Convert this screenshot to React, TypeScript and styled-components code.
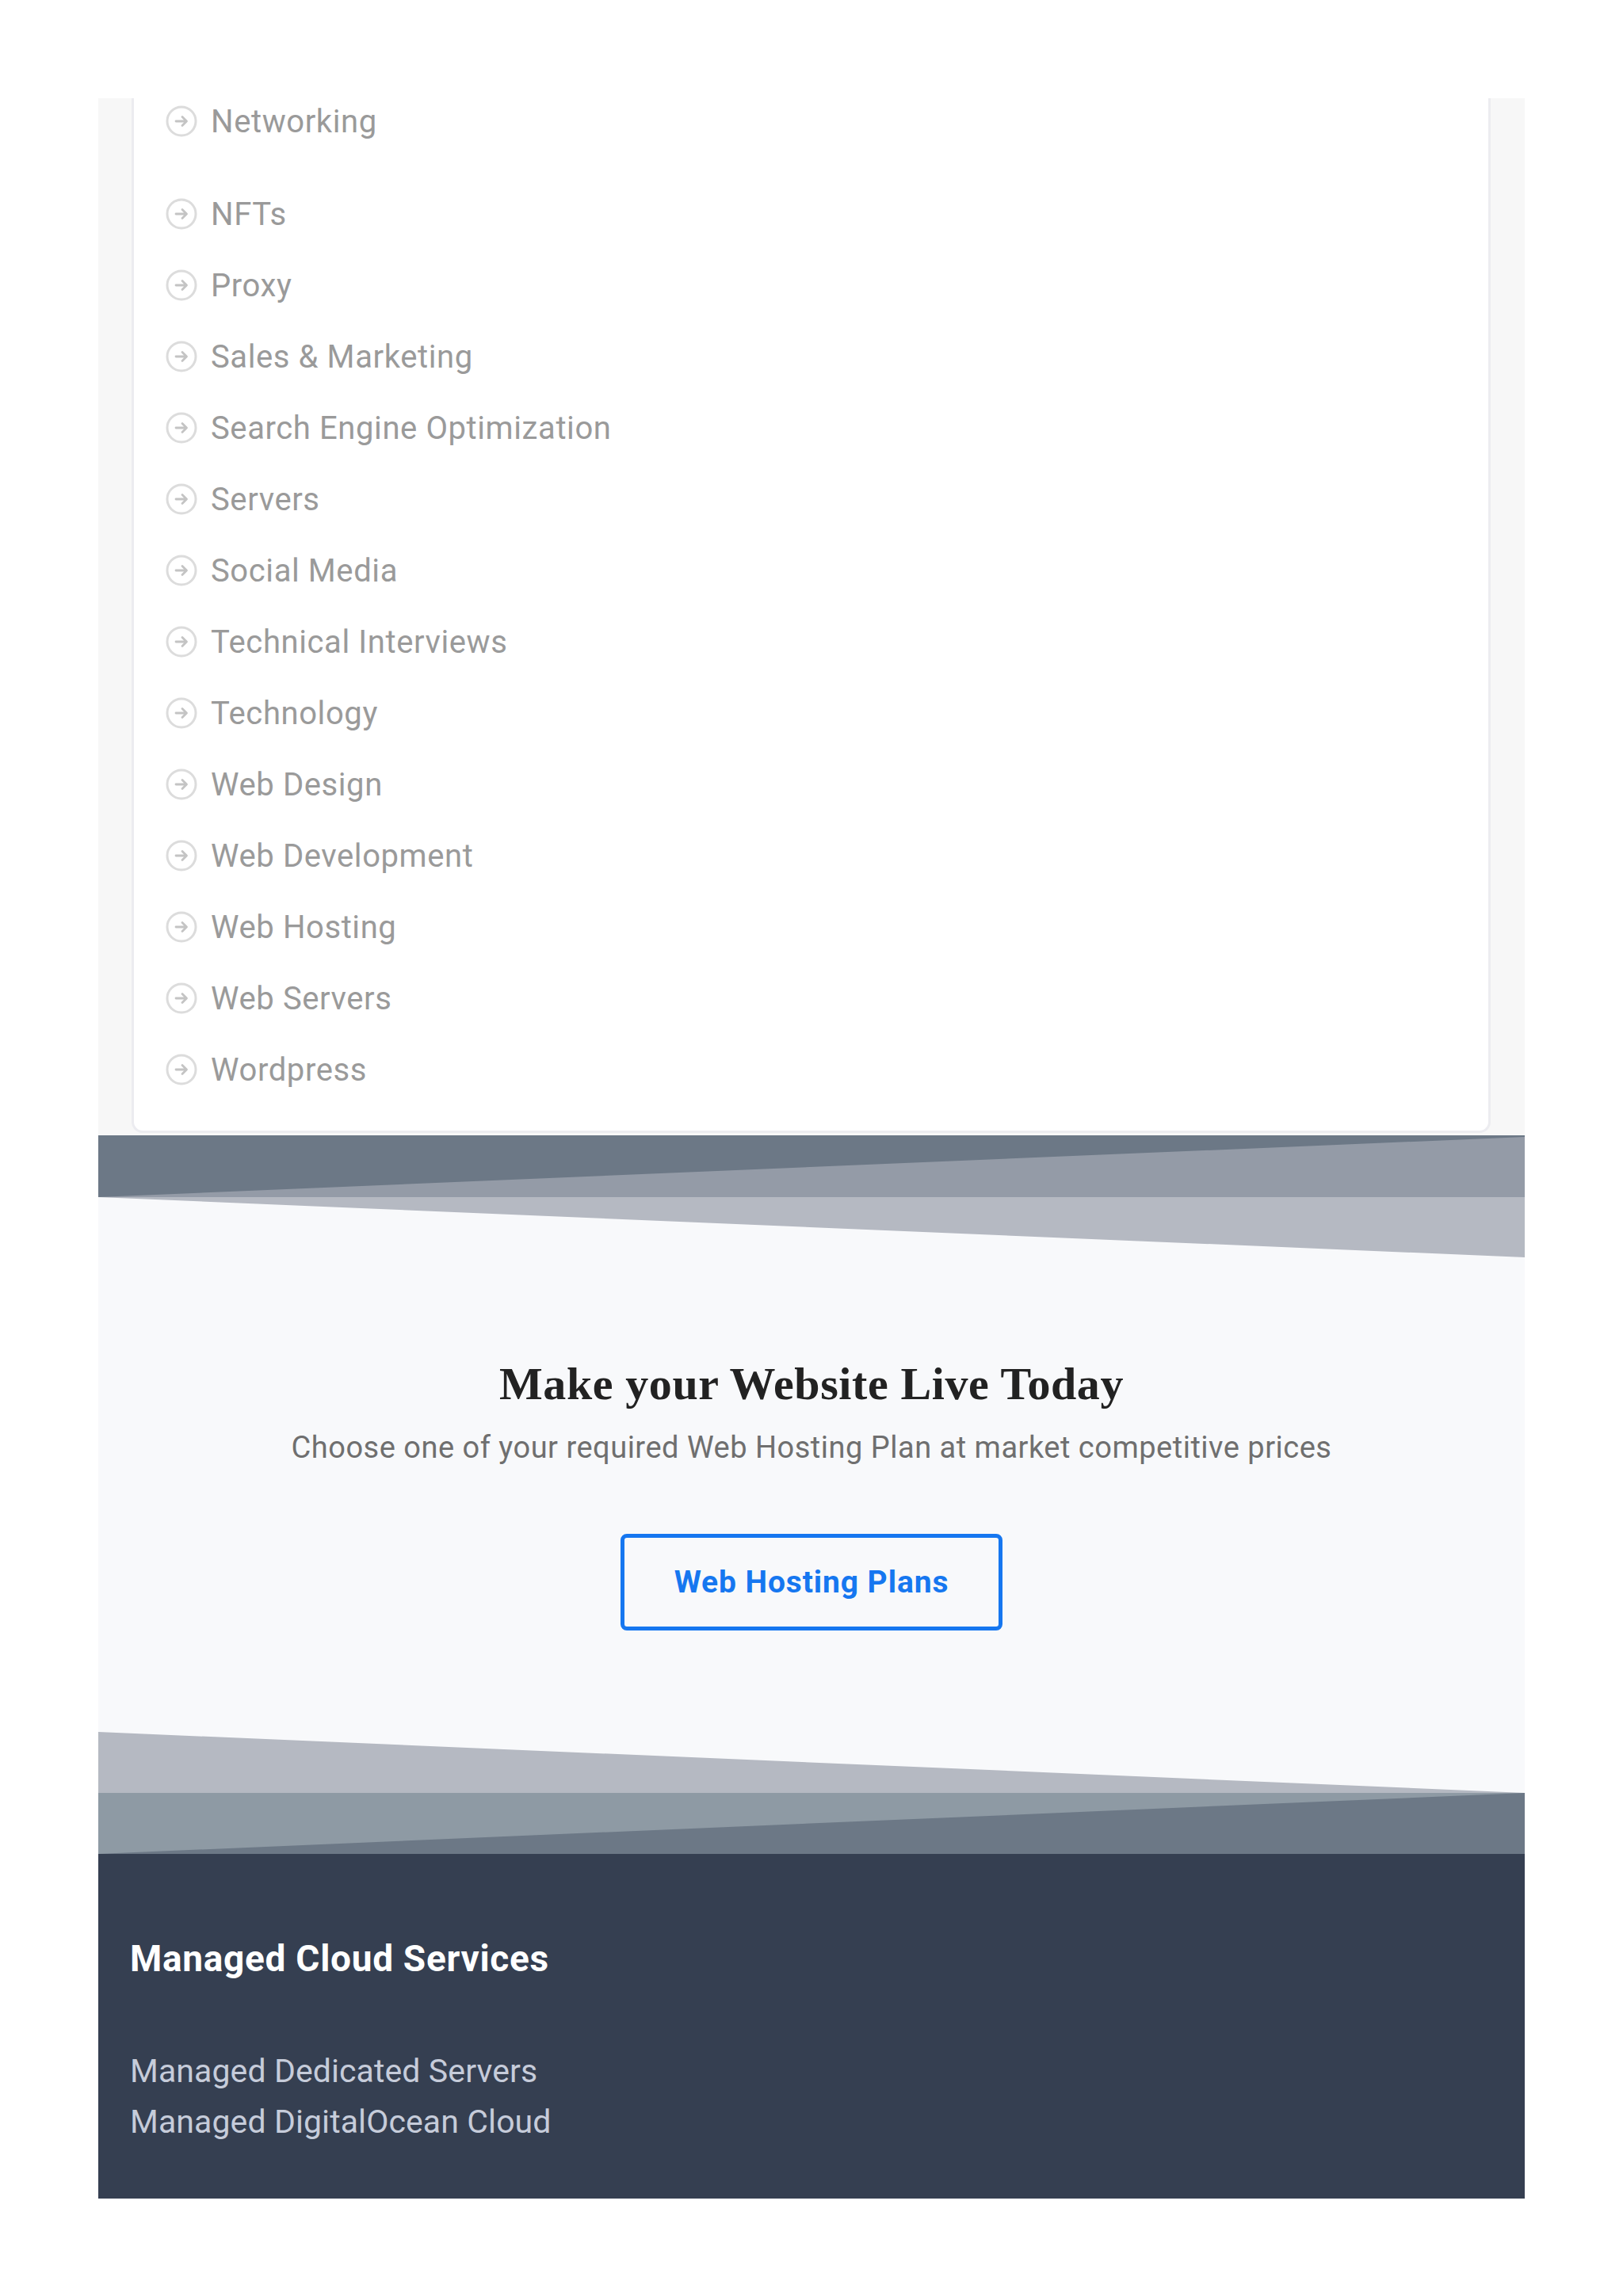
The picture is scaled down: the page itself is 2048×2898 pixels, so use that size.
import React from "react";
import styled, { createGlobalStyle } from "styled-components";

const GlobalStyle = createGlobalStyle`
  html, body {
    margin: 0;
    padding: 0;
    background: #ffffff;
    font-family: Roboto, "Liberation Sans", Arial, sans-serif;
  }
`;

const Page = styled.div`
  width: 2048px;
  padding: 124px 124px 125px;
  box-sizing: border-box;
`;

const Container = styled.div`
  width: 1800px;
  display: flex;
  flex-direction: column;
`;

const SideBg = styled.div`
  background: #f7f7f7;
  padding: 0 43px 3px 42px;
`;

const Card = styled.div`
  background: #fff;
  border: 3px solid #ececf0;
  border-top: none;
  border-radius: 0 0 14px 14px;
  padding: 0 0 32px 40px;
`;

const CategoryList = styled.ul`
  list-style: none;
  margin: 0;
  padding: 0;
  display: flex;
  flex-direction: column;
`;

const CategoryItem = styled.li<{ first?: boolean }>`
  display: flex;
  align-items: center;
  height: ${props => (props.first ? "58px" : "90px")};
  margin-bottom: ${props => (props.first ? "43px" : "0")};
  color: #9a9a9a;
  font-size: 40px;
  letter-spacing: 0.6px;
`;

const IconWrap = styled.span`
  display: inline-flex;
  width: 40px;
  height: 40px;
  margin-right: 17px;
`;

const Wave = styled.svg`
  display: block;
  width: 1800px;
  height: 154px;
`;

const Cta = styled.section`
  background: #f8f9fb;
  display: flex;
  flex-direction: column;
  align-items: center;
  padding: 125px 0 128px;
`;

const CtaTitle = styled.h2`
  margin: 0;
  font-family: "Liberation Serif", "DejaVu Serif", serif;
  font-weight: 700;
  font-size: 58px;
  line-height: 70px;
  color: #222;
  letter-spacing: 0.6px;
`;

const CtaText = styled.p`
  margin: 20px 0 0;
  font-size: 38px;
  line-height: 50px;
  color: #6f6f6f;
  letter-spacing: 0.5px;
`;

const CtaButton = styled.a`
  margin-top: 84px;
  display: flex;
  align-items: center;
  justify-content: center;
  box-sizing: border-box;
  width: 482px;
  height: 122px;
  border: 5px solid #1677f0;
  border-radius: 8px;
  color: #1677f0;
  font-weight: 700;
  font-size: 39px;
  letter-spacing: 0.9px;
  text-decoration: none;
`;

const Footer = styled.footer`
  background: #353f51;
  padding: 104px 40px 65px;
`;

const FooterTitle = styled.h3`
  margin: 0;
  color: #fff;
  font-size: 46px;
  line-height: 56px;
  font-weight: 700;
  letter-spacing: 0.7px;
`;

const FooterLinks = styled.div`
  margin-top: 82px;
  display: flex;
  flex-direction: column;
`;

const FooterLink = styled.a`
  color: #c6ccda;
  font-size: 41px;
  line-height: 64px;
  letter-spacing: 0.1px;
  text-decoration: none;
`;

const categories = [
  "Networking",
  "NFTs",
  "Proxy",
  "Sales & Marketing",
  "Search Engine Optimization",
  "Servers",
  "Social Media",
  "Technical Interviews",
  "Technology",
  "Web Design",
  "Web Development",
  "Web Hosting",
  "Web Servers",
  "Wordpress"
];

const ArrowCircle = () => (
  <IconWrap>
    <svg width="40" height="40" viewBox="0 0 40 40" fill="none">
      <circle cx="20" cy="20" r="18" stroke="#dcdcdc" strokeWidth="3" />
      <path
        d="M13 20h13M21 14.5l5.5 5.5-5.5 5.5"
        stroke="#c4c4c4"
        strokeWidth="2.8"
        strokeLinecap="round"
        strokeLinejoin="round"
      />
    </svg>
  </IconWrap>
);

const TopWave = () => (
  <Wave viewBox="0 0 1800 154" preserveAspectRatio="none">
    <rect x="0" y="0" width="1800" height="78" fill="#6c7886" />
    <polygon points="0,78 1800,2 1800,78" fill="#949ba7" />
    <rect x="0" y="78" width="1800" height="76" fill="#f8f9fb" />
    <polygon points="0,78 1800,78 1800,154" fill="#b5b9c2" />
  </Wave>
);

const BottomWave = () => (
  <Wave viewBox="0 0 1800 154" preserveAspectRatio="none">
    <rect x="0" y="0" width="1800" height="77" fill="#f8f9fb" />
    <polygon points="0,0 0,77 1800,77" fill="#b5b9c2" />
    <rect x="0" y="77" width="1800" height="77" fill="#8e9aa4" />
    <polygon points="0,154 1800,77 1800,154" fill="#6c7886" />
  </Wave>
);

const App: React.FC = () => {
  return (
    <Page>
      <GlobalStyle />
      <Container>
        <SideBg>
          <Card>
            <CategoryList>
              {categories.map((c, i) => (
                <CategoryItem key={c} first={i === 0}>
                  <ArrowCircle />
                  <span>{c}</span>
                </CategoryItem>
              ))}
            </CategoryList>
          </Card>
        </SideBg>
        <TopWave />
        <Cta>
          <CtaTitle>Make your Website Live Today</CtaTitle>
          <CtaText>
            Choose one of your required Web Hosting Plan at market competitive prices
          </CtaText>
          <CtaButton href="#">Web Hosting Plans</CtaButton>
        </Cta>
        <BottomWave />
        <Footer>
          <FooterTitle>Managed Cloud Services</FooterTitle>
          <FooterLinks>
            <FooterLink href="#">Managed Dedicated Servers</FooterLink>
            <FooterLink href="#">Managed DigitalOcean Cloud</FooterLink>
          </FooterLinks>
        </Footer>
      </Container>
    </Page>
  );
};

export default App;
